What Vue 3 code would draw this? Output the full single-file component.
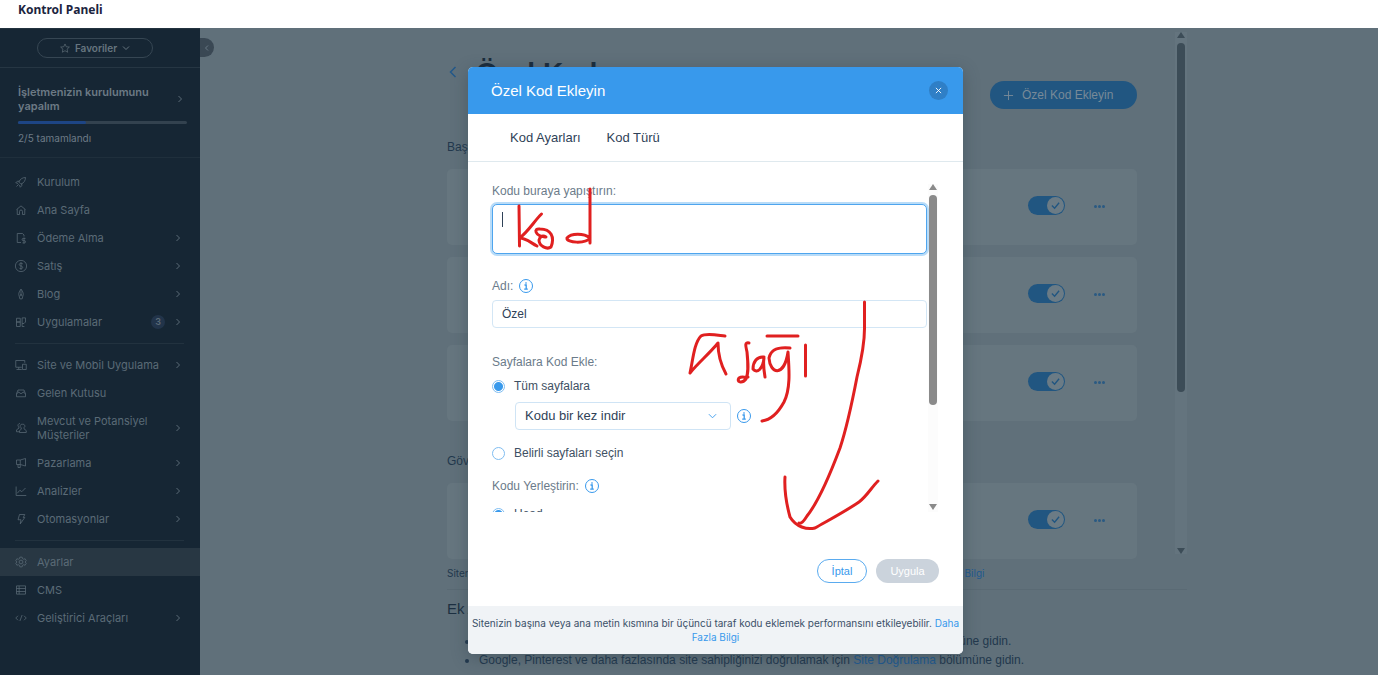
<script setup>
import { ref } from 'vue'

const I = {
  rocket: 'M14 2c-4 0-7 2-9 6l3 3c4-2 6-5 6-9zM6 7l-3 0-2 2 3 1M9 10v3l-2 2-1-3M5 11l-3 3M10 6h.01',
  home: 'M2 7.5l6-5 6 5M3 7v7h3v-4a2 2 0 0 1 4 0v4h3V7',
  pay: 'M8 14H3V2h7l2 2v2M14 8.500h-3a1.200 1.200 0 0 0 0 3h1.500a1.200 1.200 0 0 1 0 3H10M12 7.500v8',
  dollar: 'M8 .5a7.500 7.500 0 1 0 0 15a7.500 7.500 0 1 0 0-15zM10.500 5.500c-.5-1-1.300-1.200-2.500-1.200-3.200 0-3 3.400 0 3.700s3 3.700 0 3.700c-1.300 0-2-.4-2.500-1.300M8 3v10',
  pen: 'M8 1.500c-2 2.500-3 5-3 7l1.500 6h3l1.500-6c0-2-1-4.500-3-7zM8 2v7M8 8.500a1 1 0 1 0 0 2a1 1 0 1 0 0-2z',
  apps: 'M2 3h5v5H2zM2 8h5v6H2zM9.500 2.500H14V8l-2 2H9.500zM9.500 10v4h3',
  site: 'M9 11H1V2h12v3M2 14h7M10 7h5v7h-5zM5 11v3',
  inbox: 'M2 9l2-5h8l2 5v4H2zM2 9l3-2M14 9l-3-2M4.500 6.500L8 9l3.500-2.500',
  people: 'M6.500 2a2.500 2.500 0 0 0-2 4l1 2L2 10.500V13h4M10 3a2.500 2.500 0 0 1 2 4.500V9l3 2.500V14H6v-2.500L8.500 9.500 8 7.500A2.500 2.500 0 0 1 10 3z',
  horn: 'M2 4h5v6H2zM7 4l7-2v10l-7-2M4 10v4h3v-4',
  chart: 'M1.500 2v12H15M3 11l3.500-4 2.500 2 5-5',
  bolt: 'M6 2h7l-2 4h2l-6 8.500 1-5.500H4z',
  gear: 'M6.500 1.500h3l.5 2 1.500.8 2-.6 1.500 2.600L13.500 8l1.500 1.700-1.500 2.600-2-.6-1.500.8-.5 2h-3l-.5-2-1.500-.8-2 .6L1 9.700 2.500 8 1 6.300l1.500-2.600 2 .6L6 3.500zM8 5.500a2.500 2.500 0 1 0 0 5a2.500 2.500 0 1 0 0-5z',
  table: 'M2 2.500h12v11H2zM2 6h12M2 10h12M5.500 2.500v11',
  code: 'M4 5L1 8l3 3M12 5l3 3-3 3M9.500 4l-3 8',
}

const groups = [
  [
    { t: 'Kurulum', i: I.rocket },
    { t: 'Ana Sayfa', i: I.home },
    { t: 'Ödeme Alma', i: I.pay, more: true },
    { t: 'Satış', i: I.dollar, more: true },
    { t: 'Blog', i: I.pen, more: true },
    { t: 'Uygulamalar', i: I.apps, more: true, n: 3 },
  ],
  [
    { t: 'Site ve Mobil Uygulama', i: I.site, more: true },
    { t: 'Gelen Kutusu', i: I.inbox },
    { t: 'Mevcut ve Potansiyel Müşteriler', i: I.people, more: true },
    { t: 'Pazarlama', i: I.horn, more: true },
    { t: 'Analizler', i: I.chart, more: true },
    { t: 'Otomasyonlar', i: I.bolt, more: true },
  ],
  [
    { t: 'Ayarlar', i: I.gear, active: true },
    { t: 'CMS', i: I.table },
    { t: 'Geliştirici Araçları', i: I.code, more: true },
  ],
]

const headCodes = ref([true, true, true])
const bodyCodes = ref([true])
const code = ref('')
const name = ref('Özel')
const pages = ref('all')
const load = ref('once')
const place = ref('head')
</script>

<template>
  <div class="page">
    <header class="top"><strong>Kontrol Paneli</strong></header>
    <div class="shell">
      <aside class="side">
        <div class="fav">
          <button type="button">
            <svg class="ic10" viewBox="0 0 16 16"><path d="M8 1.500l2 4.500 5 .5-3.700 3.300 1 5L8 12.300l-4.300 2.500 1-5L1 6.500 6 6z" /></svg>
            Favoriler
            <svg class="ic8" viewBox="0 0 16 16"><path d="M2 5l6 6 6-6" /></svg>
          </button>
        </div>
        <a class="setup" href="#">
          <span class="setup-row">
            <b>İşletmenizin kurulumunu yapalım</b>
            <svg class="ic8" viewBox="0 0 16 16"><path d="M5 2l6 6-6 6" /></svg>
          </span>
          <span class="bar"><i></i></span>
          <small>2/5 tamamlandı</small>
        </a>
        <nav>
          <ul v-for="(g, k) in groups" :key="k">
            <li v-for="m in g" :key="m.t">
              <a href="#" :class="{ active: m.active }">
                <svg class="ic12" viewBox="0 0 16 16"><path :d="m.i" /></svg>
                <span class="t">{{ m.t }}</span>
                <span v-if="m.n" class="n">{{ m.n }}</span>
                <svg v-if="m.more" class="ic8" viewBox="0 0 16 16"><path d="M5 2l6 6-6 6" /></svg>
              </a>
            </li>
          </ul>
        </nav>
      </aside>

      <main class="main">
        <button type="button" class="collapse" aria-label="Menüyü daralt">
          <svg class="ic8" viewBox="0 0 16 16"><path d="M10 3L5 8l5 5" /></svg>
        </button>
        <div class="content">
          <div class="head">
            <a href="#" class="back" aria-label="Geri"><svg viewBox="0 0 8 12"><path d="M6.500 1l-5 5 5 5" /></svg></a>
            <h1>Özel Kod</h1>
            <button type="button" class="add">
              <svg viewBox="0 0 12 12"><path d="M6 1v10M1 6h10" /></svg>Özel Kod Ekleyin
            </button>
          </div>
          <h2>Başlık</h2>
          <div v-for="(c, k) in headCodes" :key="k" class="card">
            <label class="toggle">
              <input v-model="headCodes[k]" type="checkbox" aria-label="Etkin" />
              <span><svg viewBox="0 0 10 10"><path d="M1 5l3 3 5-6" /></svg></span>
            </label>
            <button type="button" class="dots" aria-label="Diğer"><i></i><i></i><i></i></button>
          </div>
          <h2 class="second">Gövde</h2>
          <div v-for="(c, k) in bodyCodes" :key="k" class="card">
            <label class="toggle">
              <input v-model="bodyCodes[k]" type="checkbox" aria-label="Etkin" />
              <span><svg viewBox="0 0 10 10"><path d="M1 5l3 3 5-6" /></svg></span>
            </label>
            <button type="button" class="dots" aria-label="Diğer"><i></i><i></i><i></i></button>
          </div>
          <p class="hint">Sitenizin başına veya ana metin kısmına bir üçüncü taraf kodu eklemek performansını etkileyebilir. <a href="#">Daha Fazla Bilgi</a></p>
          <section class="extra">
            <h3>Ek Araçlar</h3>
            <ul>
              <li>Google Analytics, Facebook Pixel ve daha fazlasını siteye bağlamak için <a href="#">Pazarlama</a> bölümüne gidin.</li>
              <li>Google, Pinterest ve daha fazlasında site sahipliğinizi doğrulamak için <a href="#">Site Doğrulama</a> bölümüne gidin.</li>
            </ul>
          </section>
        </div>
        <div class="sb outer"><span class="up"></span><span class="track"><i></i></span><span class="down"></span></div>
      </main>
    </div>

    <div class="overlay">
      <section class="modal" role="dialog" aria-labelledby="dlg">
        <header class="m-head">
          <h2 id="dlg">Özel Kod Ekleyin</h2>
          <button type="button" aria-label="Kapat"><svg viewBox="0 0 8 8"><path d="M1 1l6 6M7 1L1 7" /></svg></button>
        </header>
        <nav class="tabs"><a href="#">Kod Ayarları</a><a href="#">Kod Türü</a></nav>
        <div class="m-body">
          <form class="form" @submit.prevent>
            <label for="code">Kodu buraya yapıştırın:</label>
            <div class="area"><textarea id="code" v-model="code"></textarea><span class="caret"></span></div>
            <div class="line name"><label for="name">Adı:</label>
              <svg class="info" viewBox="0 0 14 14"><circle cx="7" cy="7" r="6.500" /><path class="i" d="M5.500 6h1.700v4M5.200 10.200h3.600M7 3.300v1.500" /></svg>
            </div>
            <input id="name" v-model="name" type="text" class="text" />
            <p class="q">Sayfalara Kod Ekle:</p>
            <label class="radio"><input v-model="pages" type="radio" name="pages" value="all" />Tüm sayfalara</label>
            <div class="line sel">
              <div class="select">
                <select v-model="load" aria-label="Yükleme">
                  <option value="once">Kodu bir kez indir</option>
                </select>
                <svg viewBox="0 0 10 6"><path d="M1 1l4 4 4-4" /></svg>
              </div>
              <svg class="info" viewBox="0 0 14 14"><circle cx="7" cy="7" r="6.500" /><path class="i" d="M5.500 6h1.700v4M5.200 10.200h3.600M7 3.300v1.500" /></svg>
            </div>
            <label class="radio"><input v-model="pages" type="radio" name="pages" value="some" />Belirli sayfaları seçin</label>
            <div class="line place"><span>Kodu Yerleştirin:</span>
              <svg class="info" viewBox="0 0 14 14"><circle cx="7" cy="7" r="6.500" /><path class="i" d="M5.500 6h1.700v4M5.200 10.200h3.600M7 3.300v1.500" /></svg>
            </div>
            <label class="radio"><input v-model="place" type="radio" name="place" value="head" />Head</label>
          </form>
          <div class="sb inner"><span class="up"></span><span class="track"><i></i></span><span class="down"></span></div>
        </div>
        <div class="actions">
          <button type="button" class="cancel">İptal</button>
          <button type="button" class="apply">Uygula</button>
        </div>
        <footer class="note">Sitenizin başına veya ana metin kısmına bir üçüncü taraf kodu eklemek performansını etkileyebilir. <a href="#">Daha Fazla Bilgi</a></footer>
        <svg class="ink" viewBox="468 67 495 587" aria-hidden="true">
          <path d="M519 206L519.500 246M541.500 214C535 220 528 232 519.500 238C526 238 531 243 537 246M545 237C535 236 533 228 540 229C551 229 555 237 551 247C547 250 539 246 539 240C540 236 543 235 546 237" />
          <path d="M590 189V243M590 238C584 233 571 233 567 238C566 243 586 244 590 238" />
          <path d="M725 336C716 335 706 333 701 336C694 343 693 360 690 373C697 364 709 354 718 343C718 354 721 365 726 374" />
          <path d="M749 343C744 342 746 347 747 352C748 362 749 372 746 379C742 384 736 382 739 378C742 376 745 378 748 377" />
          <path d="M764 357C757 356 753 362 753 369C757 374 763 369 764 358C763 364 764 371 765 377" />
          <path d="M767 336H798M790 348C780 347 771 348 769 358C770 374 784 378 788 352C789 368 791 388 784 402C778 413 770 420 762 421" />
          <path d="M805.500 345V376" />
          <path d="M864.500 302V325C865 342 862 357 857 377C852 403 847 427 840 448C831 472 819 501 807 516C804 521 801 524 799 523" />
          <path d="M785 477C784 493 787 506 790 517C796 527 807 530 815 528C829 520 846 511 859 502C867 496 871 488 878 481" />
        </svg>
      </section>
    </div>
  </div>
</template>

<style>
body { margin: 0; overflow: hidden; }
</style>

<style scoped>
* { box-sizing: border-box; }
.page { position: relative; display: flex; flex-direction: column; height: 100vh; overflow: hidden; background: #60707a; font-family: "Liberation Sans", Arial, sans-serif; }
svg { fill: none; stroke: currentColor; stroke-width: 1; flex: none; display: block; }
a { text-decoration: none; color: inherit; }
button { font: inherit; border: 0; padding: 0; background: none; color: inherit; }
ul, h1, h2, h3, p { margin: 0; padding: 0; font-weight: 400; }
.ic12 { width: 12px; height: 12px; }
.ic10 { width: 10px; height: 10px; stroke-width: 1; }
.ic8 { width: 8px; height: 8px; stroke-width: 2; }

.top { flex: none; height: 28px; padding-left: 18px; background: #fff; color: #1c2440; font: 700 12px/20px "Noto Sans", sans-serif; }
.top strong { font-weight: 700; }
.shell { flex: 1; display: flex; min-height: 0; }
.side { flex: none; width: 200px; background: #162634; color: #5b6b77; font: 500 11px/14px Inter, "Noto Sans", sans-serif; border-top: 1px solid #22323f; }
.fav { display: flex; justify-content: center; padding: 9px 10px 9px 0; border-bottom: 1px solid #263643; }
.fav button { display: flex; align-items: center; justify-content: center; gap: 5px; width: 116px; height: 20px; border: 1px solid #364653; border-radius: 10px; font-weight: 600; font-size: 10px; color: #66757f; }
.setup { display: block; padding: 17px 13px 12px 18px; border-bottom: 1px solid #1f2f3c; }
.setup-row { display: flex; align-items: center; justify-content: space-between; padding-right: 3px; }
.setup b { width: 136px; font-weight: 600; color: #6c7a85; }
.bar { display: block; height: 3px; margin: 8px 0 7px; border-radius: 2px; background: #33424f; }
.bar i { display: block; width: 40%; height: 3px; border-radius: 2px; background: #1d4585; }
.setup small { display: block; font-size: 10px; line-height: 14px; font-weight: 400; color: #6d7b87; }
.side nav ul { list-style: none; padding: 10px 0 7px; margin: 0; }
.side nav ul + ul::before { content: ""; display: block; height: 1px; margin: 0 16px 7px 15px; background: #22323f; }
.side nav ul + ul { padding-top: 0; }
.side nav li a { display: flex; align-items: center; padding: 7px 18px 7px 15px; }
.side nav .t { flex: 1; margin-left: 10px; padding-right: 5px; }
.side nav .active { background: #283743; }
.n { width: 14px; height: 14px; margin-right: 9px; border-radius: 7px; background: #22344a; font-size: 9px; font-weight: 600; text-align: center; }

.main { flex: 1; min-width: 0; position: relative; display: grid; grid-template-columns: minmax(0, 1fr) 12px; column-gap: 38px; padding: 0 191px 0 247px; color: #22384d; }
.collapse { position: absolute; left: 0; top: 10px; width: 14px; height: 19px; border-radius: 0 10px 10px 0; background: #3a4854; color: #687884; display: flex; align-items: center; justify-content: center; }
.head { display: flex; align-items: flex-start; padding-top: 29px; height: 110px; }
.back { color: #23588a; margin-top: 9px; margin-right: 19px; }
.back svg { width: 8px; height: 12px; stroke-width: 1.5; margin-left: 2px; }
h1 { flex: 1; font-size: 28px; line-height: 32px; font-weight: 700; color: #1a2c3c; }
.add { display: flex; align-items: center; gap: 8px; width: 147px; height: 28px; margin-top: 24px; padding-left: 13px; border-radius: 14px; background: #215681; color: #788a98; font-size: 12px; }
.add svg { width: 11px; height: 11px; }
.content h2 { font-size: 12px; line-height: 18px; margin-bottom: 13px; }
.content h2.second { margin-top: 31px; }
.card { display: flex; align-items: center; justify-content: flex-end; height: 76px; padding: 0 31px 4px 0; border-radius: 5px; background: #66767f; }
.card + .card { margin-top: 12px; }
.toggle { position: relative; width: 37px; height: 19px; }
.toggle input { appearance: none; margin: 0; display: block; width: 37px; height: 19px; border-radius: 10px; background: #66767f; }
.toggle input:checked { background: #215681; }
.toggle span { position: absolute; right: 1px; top: 1px; width: 17px; height: 17px; border-radius: 9px; background: #6b7b85; color: #215681; display: flex; align-items: center; justify-content: center; pointer-events: none; }
.toggle svg { width: 9px; height: 9px; stroke-width: 1.5; }
.dots { display: flex; gap: 1px; width: 12px; margin-left: 29px; padding-top: 3px; }
.dots i { width: 3px; height: 3px; border-radius: 2px; background: #2a5a83; }
.hint { font: 10px/14px Inter, "Noto Sans", sans-serif; margin-top: 7px; }
.hint a, .extra a { color: #215a90; }
.extra { margin-top: 9px; margin-right: -50px; border-top: 1px solid #5a6a74; padding-top: 9px; }
.extra h3 { font-size: 15px; line-height: 20px; color: #1d3042; }
.extra ul { padding-left: 32px; margin-top: 13px; font-size: 12px; line-height: 19px; }

.sb { display: flex; flex-direction: column; align-items: center; }
.sb .track { flex: 1; width: 100%; display: flex; justify-content: center; margin: 5px 0; }
.sb .up, .sb .down { width: 8px; height: 6px; background: #8a8a8a; clip-path: polygon(50% 0, 100% 100%, 0 100%); }
.sb .down { clip-path: polygon(0 0, 100% 0, 50% 100%); }
.sb i { width: 8px; border-radius: 4px; background: #8a8a8a; }
.outer { height: 522px; margin-top: 4px; background: #64747e; }
.outer .up, .outer .down, .outer i { background: #3c4c57; }
.outer i { height: 349px; }

.overlay { position: absolute; inset: 28px 0 0 53px; display: flex; align-items: flex-start; justify-content: center; padding-top: 39px; }
.modal { position: relative; width: 495px; border-radius: 5px; overflow: hidden; background: #fff; color: #2f4258; box-shadow: 0 4px 16px #2b3b4866; font-size: 12px; line-height: 16px; }
.m-head { display: flex; align-items: center; justify-content: space-between; height: 47px; padding: 0 15px 0 23px; background: #3899ec; color: #fff; }
.m-head h2 { font-size: 15px; line-height: 20px; }
.m-head button { width: 19px; height: 19px; border-radius: 10px; background: #2f7fc6; display: flex; align-items: center; justify-content: center; }
.m-head svg { width: 7px; height: 7px; }
.tabs { display: flex; gap: 26px; height: 48px; padding: 0 42px; align-items: center; border-bottom: 1px solid #dfe9ee; font-size: 13px; }
.m-body { display: flex; justify-content: space-between; height: 350px; padding: 0 25px 0 24px; overflow: hidden; }
.form { width: 435px; padding-top: 21px; color: #6b7b8a; }
.form > label { display: block; }
.area { position: relative; margin-top: 5px; }
textarea { display: block; width: 100%; height: 50px; padding: 8px 10px; border: 1px solid #4ea5ee; border-radius: 5px; box-shadow: 0 0 0 2px #b9dcf8; resize: none; outline: 0; font: inherit; color: #2f4258; }
.caret { position: absolute; left: 10px; top: 8px; width: 1px; height: 15px; background: #2f4258; }
.line { display: flex; align-items: center; gap: 6px; }
.info { width: 14px; height: 14px; color: #3899ec; }
.info .i { stroke-width: 1.3; }
.name { margin-top: 24px; }
.text { display: block; width: 100%; height: 28px; margin-top: 6px; padding: 0 9px; border: 1px solid #d3e6f5; border-radius: 4px; font: inherit; color: #2f4258; outline: 0; }
.q { margin-top: 26px; }
.form .radio { display: flex; align-items: center; gap: 9px; margin-top: 8px; color: #3e5063; }
.radio input { appearance: none; flex: none; width: 13px; height: 13px; margin: 0; border: 1px solid #7fbdf1; border-radius: 7px; background: #fff; }
.radio input:checked { background: radial-gradient(circle, #3899ec 4px, #fff 5px); }
.sel { margin: 8px 0 15px 23px; }
.select { position: relative; width: 216px; }
.select select { appearance: none; display: block; width: 100%; height: 28px; padding: 0 9px; border: 1px solid #cfe4f5; border-radius: 4px; background: #fff; font: inherit; font-size: 13px; color: #2f4258; }
.select svg { position: absolute; right: 14px; top: 11px; width: 9px; height: 6px; color: #3899ec; }
.form .sel + .radio { margin-top: 0; }
.place { margin-top: 17px; }
.form .place + .radio { margin-top: 12px; }
.inner { width: 10px; margin-top: 22px; background: #fcfcfc; }
.inner .down { margin-bottom: 2px; }
.inner i { height: 210px; }
.actions { display: flex; justify-content: flex-end; gap: 9px; padding: 47px 24px 23px; font-size: 11px; }
.actions button { height: 24px; border-radius: 12px; }
.cancel { width: 50px; border: 1px solid #5aabef; color: #3899ec; }
.apply { width: 63px; background: #cbd3dc; color: #fff; }
.note { padding: 10px 2px; background: #f0f3f6; font: 10px/14px Inter, "Noto Sans", sans-serif; text-align: center; color: #3b5068; }
.note a { color: #3899ec; }
.ink { position: absolute; inset: 0; width: 100%; height: 100%; color: #e02020; stroke-width: 3; stroke-linecap: round; stroke-linejoin: round; pointer-events: none; }
</style>
